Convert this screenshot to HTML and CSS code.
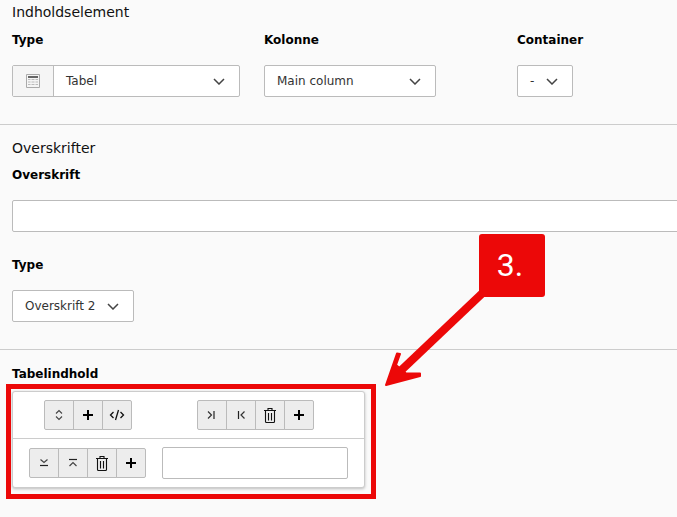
FILE: index.html
```html
<!DOCTYPE html>
<html lang="da">
<head>
<meta charset="utf-8">
<title>Indholdselement</title>
<link rel="stylesheet" href="styles.css">
</head>
<body>
<svg class="defs" width="0" height="0" aria-hidden="true">
  <symbol id="chev" viewBox="0 0 12 7"><path d="M1 1l5 5 5-5" fill="none" stroke="#444" stroke-width="1.500"/></symbol>
  <symbol id="plus" viewBox="0 0 16 16"><path d="M8 3v10M3 8h10" fill="none" stroke="#000" stroke-width="2"/></symbol>
  <symbol id="trash" viewBox="0 0 16 16"><path d="M2 3.500h12M3.500 3.500v11a1 1 0 0 0 1 1h7a1 1 0 0 0 1-1v-11M6 3.500v-2h4v2M6.500 6v7.500M9.500 6v7.500" fill="none" stroke="#111" stroke-width="1.100"/></symbol>
</svg>

<section class="section first">
  <h2 class="legend">Indholdselement</h2>
  <div class="fields">
    <div class="field col-type">
      <label class="label">Type</label>
      <div class="select w-type">
        <span class="addon">
          <svg width="14" height="14" viewBox="0 0 14 14"><path d="M.5.500h13v13H.5z" fill="#f5f5f5" stroke="#aaa"/><path d="M2 2h10v2H2z" fill="#666"/><path d="M2 5.500h2.500M5.500 5.500h3M9.500 5.500H12M2 8h2.500M5.500 8h3M9.500 8H12M2 10.500h2.500M5.500 10.500h3M9.500 10.500H12" stroke="#bbb" fill="none"/></svg>
        </span>
        <span class="value">Tabel</span>
        <svg class="chev"><use href="#chev"/></svg>
      </div>
    </div>
    <div class="field col-kol">
      <label class="label">Kolonne</label>
      <div class="select w-kol"><span class="value">Main column</span><svg class="chev"><use href="#chev"/></svg></div>
    </div>
    <div class="field">
      <label class="label">Container</label>
      <div class="select w-con"><span class="value">-</span><svg class="chev"><use href="#chev"/></svg></div>
    </div>
  </div>
</section>

<section class="section second">
  <h2 class="legend">Overskrifter</h2>
  <label class="label">Overskrift</label>
  <input class="text wide" type="text">
  <label class="label gap-label">Type</label>
  <div class="select w-head"><span class="value">Overskrift 2</span><svg class="chev"><use href="#chev"/></svg></div>
</section>

<section class="section third">
  <label class="label tight">Tabelindhold</label>
  <div class="table-box">
    <div class="row">
      <div class="group">
        <button class="btn" type="button"><svg width="16" height="16" viewBox="0 0 16 16"><path d="M5 6.500l3-3 3 3M5 9.500l3 3 3-3" fill="none" stroke="#444" stroke-width="1.100"/></svg></button>
        <button class="btn" type="button"><svg width="16" height="16"><use href="#plus"/></svg></button>
        <button class="btn" type="button"><svg width="16" height="16" viewBox="0 0 16 16"><path d="M4.500 5L1.500 8l3 3M11.500 5l3 3-3 3M9.500 3l-3 10" fill="none" stroke="#111" stroke-width="1.300"/></svg></button>
      </div>
      <div class="group">
        <button class="btn" type="button"><svg width="16" height="16" viewBox="0 0 16 16"><path d="M4 4.500L7.500 8 4 11.500" fill="none" stroke="#333" stroke-width="1.200"/><path d="M10 4v8" stroke="#222" stroke-width="1.200"/></svg></button>
        <button class="btn" type="button"><svg width="16" height="16" viewBox="0 0 16 16"><path d="M11.500 4.500L8 8l3.500 3.500" fill="none" stroke="#333" stroke-width="1.200"/><path d="M5.500 4v8" stroke="#222" stroke-width="1.200"/></svg></button>
        <button class="btn" type="button"><svg width="16" height="16"><use href="#trash"/></svg></button>
        <button class="btn" type="button"><svg width="16" height="16"><use href="#plus"/></svg></button>
      </div>
    </div>
    <div class="row">
      <div class="group">
        <button class="btn" type="button"><svg width="16" height="16" viewBox="0 0 16 16"><path d="M4.500 4.500L8 7.500l3.500-3" fill="none" stroke="#444" stroke-width="1.200"/><path d="M4 10.500h8" stroke="#222" stroke-width="1.200"/></svg></button>
        <button class="btn" type="button"><svg width="16" height="16" viewBox="0 0 16 16"><path d="M4.500 11L8 7.500l3.500 3.500" fill="none" stroke="#444" stroke-width="1.200"/><path d="M4 4.500h8" stroke="#222" stroke-width="1.200"/></svg></button>
        <button class="btn" type="button"><svg width="16" height="16"><use href="#trash"/></svg></button>
        <button class="btn" type="button"><svg width="16" height="16"><use href="#plus"/></svg></button>
      </div>
      <input class="text cell" type="text">
    </div>
  </div>
</section>

<div class="frame"></div>
<svg class="arrow" width="110" height="110" viewBox="0 0 110 110">
  <path d="M111 -2L12 92" fill="none" stroke="#ec0808" stroke-width="8"/>
  <path d="M6 98L17 66.500L20 67L16 78L26 86.500L40 86.500L40 89Z" fill="#ec0808" stroke="#ec0808" stroke-width="2" stroke-linejoin="round"/>
</svg>
<div class="badge">3.</div>
</body>
</html>
```
FILE: styles.css
```css
* { box-sizing: border-box; }
html, body { margin: 0; padding: 0; }
body {
  position: relative;
  width: 677px;
  height: 517px;
  overflow: hidden;
  background: #fafafa;
  color: #333;
  font-family: "DejaVu Sans", Verdana, sans-serif;
  font-size: 12px;
}
.defs { position: absolute; }
.section { padding-left: 12px; border-bottom: 1px solid #ccc; }
.section.first { height: 125px; }
.section.second { height: 225px; padding-top: 11px; }
.section.third { border-bottom: 0; padding-top: 15px; }
.legend {
  margin: 0 0 6px;
  font-size: 14px;
  font-weight: 400;
  line-height: 24px;
  color: #111;
}
.first .fields { display: flex; }
.first .legend { margin-bottom: 7px; }
.col-type { width: 252px; }
.col-kol { width: 253px; }
.label {
  display: block;
  margin-bottom: 16px;
  font-size: 12px;
  font-weight: 700;
  line-height: 18px;
  color: #000;
}
.gap-label { margin-top: 24px; margin-bottom: 16px; }
.tight { margin-bottom: 8px; }
.select {
  display: flex;
  align-items: center;
  height: 32px;
  background: #fff;
  border: 1px solid #bbb;
  border-radius: 2px;
}
.w-type { width: 228px; }
.w-kol { width: 172px; }
.w-con { width: 56px; }
.w-head { width: 122px; }
.addon {
  display: flex;
  align-items: center;
  justify-content: center;
  width: 41px;
  height: 100%;
  flex: none;
  background: #f5f5f5;
  border-right: 1px solid #bbb;
}
.value { flex: 1; padding-left: 12px; white-space: nowrap; }
.chev { width: 12px; height: 7px; flex: none; margin-right: 14px; }
.text {
  display: block;
  height: 32px;
  background: #fff;
  border: 1px solid #bbb;
  border-radius: 2px;
  padding: 0 12px;
  outline: 0;
}
.wide { width: 680px; }
.cell { width: 186px; }
.table-box {
  width: 353px;
  height: 97px;
  background: #fff;
  border: 1px solid #ccc;
  border-radius: 3px;
  box-shadow: 0 1px 3px rgba(0, 0, 0, .25);
}
.row {
  display: grid;
  grid-template-columns: 149px 186px;
  align-items: center;
  justify-items: center;
  height: 46px;
}
.row + .row { height: 49px; border-top: 1px solid #ccc; }
.group { display: flex; height: 30px; }
.btn {
  display: flex;
  align-items: center;
  justify-content: center;
  width: 30px;
  height: 30px;
  margin: 0 0 0 -1px;
  padding: 0;
  background: #ededed;
  border: 1px solid #bbb;
}
.btn:first-child { margin-left: 0; border-radius: 2px 0 0 2px; }
.btn:last-child { border-radius: 0 2px 2px 0; }
.frame {
  position: absolute;
  left: 6px;
  top: 384px;
  width: 370px;
  height: 115px;
  border: 5px solid #ec0808;
}
.badge {
  position: absolute;
  left: 479px;
  top: 234px;
  width: 66px;
  height: 63px;
  padding-right: 4px;
  background: #ec0808;
  border-radius: 3px;
  color: #fff;
  font-family: Roboto, "Liberation Sans", sans-serif;
  font-size: 32px;
  line-height: 62px;
  text-align: center;
}
.arrow { position: absolute; left: 380px; top: 287px; overflow: visible; }
```
